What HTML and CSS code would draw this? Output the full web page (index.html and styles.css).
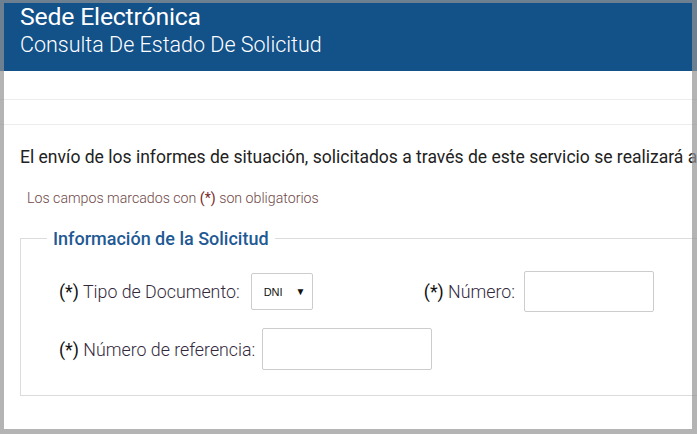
FILE: index.html
```html
<!DOCTYPE html>
<html lang="es">
<head>
<meta charset="utf-8">
<title>Sede Electrónica</title>
<link rel="stylesheet" href="styles.css">
</head>
<body>
<div class="page">
  <header class="header">
    <div class="title">Sede Electrónica</div>
    <div class="subtitle">Consulta De Estado De Solicitud</div>
  </header>
  <div class="bar bar1"></div>
  <div class="bar bar2"></div>
  <main class="content">
    <p class="intro">El envío de los informes de situación, solicitados a través de este servicio se realizará a la dirección de correo electrónico indicada.</p>
    <p class="note">Los campos marcados con <span class="req">(*)</span> son obligatorios</p>
    <fieldset class="box">
      <legend class="legend">Información de la Solicitud</legend>
      <div class="box-body">
        <div class="row1">
          <div class="group">
            <label class="label"><span class="ast">(*)</span> Tipo de Documento:</label>
            <div class="select"><span class="sel-val">DNI</span><span class="arrow">▼</span></div>
          </div>
          <label class="label label-right"><span class="ast">(*)</span> Número:</label>
          <div class="input input-num"></div>
        </div>
        <div class="row2">
          <label class="label"><span class="ast">(*)</span> Número de referencia:</label>
          <div class="input input-ref"></div>
        </div>
      </div>
    </fieldset>
  </main>
</div>
<div class="frame"></div>
</body>
</html>
```
FILE: styles.css
```css
html, body {
  margin: 0;
  padding: 0;
  background: #fff;
  overflow: hidden;
}
body {
  width: 697px;
  height: 434px;
  font-family: Roboto, "Liberation Sans", Arial, sans-serif;
  color: #222;
}
.page {
  width: 697px;
  height: 434px;
  overflow: hidden;
}
.header {
  background: #135189;
  height: 71px;
  box-sizing: border-box;
  padding: 3px 0 0 20px;
  color: #fff;
}
.title {
  font-size: 24.8px;
  line-height: 28px;
  font-weight: 400;
  letter-spacing: -0.2px;
}
.subtitle {
  font-size: 21.5px;
  line-height: 24px;
  font-weight: 300;
  margin-top: 2px;
}
.bar {
  border-bottom: 1px solid #ececec;
}
.bar1 { height: 28px; }
.bar2 { height: 24px; }
.content {
  padding: 0 0 0 20px;
}
.intro {
  margin: 21px 0 0 0;
  font-size: 17.55px;
  line-height: 22px;
  white-space: nowrap;
  color: #222;
}
.note {
  margin: 21px 0 0 7px;
  font-size: 14.2px;
  line-height: 18px;
  font-weight: 300;
  color: #6f4848;
}
.req {
  color: #7a1f1f;
  font-weight: 400;
}
.box {
  margin: 21px 0 0 0;
  padding: 0;
  border: 1px solid #dcdcdc;
  width: 720px;
  box-sizing: border-box;
}
.legend {
  margin-left: 26px;
  padding: 0 6px;
  font-size: 18px;
  font-weight: 500;
  color: #1f5a94;
}
.box-body {
  padding: 22px 0 25px 38px;
}
.row1 {
  display: grid;
  grid-template-columns: 306px 159px 130px;
  align-items: center;
}
.row2 {
  display: flex;
  align-items: center;
  margin-top: 16px;
}
.group {
  display: flex;
  align-items: center;
}
.label {
  font-size: 17.8px;
  font-weight: 300;
  color: #33293d;
  white-space: nowrap;
}
.ast {
  color: #111;
  font-weight: 400;
}
.label-right {
  text-align: right;
  padding-right: 9px;
}
.select {
  margin-left: 11px;
  width: 62px;
  height: 37px;
  box-sizing: border-box;
  border: 1px solid #ccc;
  border-radius: 2px;
  display: flex;
  align-items: center;
  padding: 0 0 0 12px;
  font-size: 11px;
  color: #111;
}
.sel-val {
  font-family: "Liberation Sans", Arial, sans-serif;
}
.arrow {
  margin-left: 13px;
  font-size: 10px;
  color: #111;
}
.input {
  box-sizing: border-box;
  border: 1px solid #ccc;
  border-radius: 2px;
  background: #fff;
}
.input-num {
  width: 130px;
  height: 41px;
}
.input-ref {
  margin-left: 7px;
  width: 170px;
  height: 42px;
}
.frame {
  position: fixed;
  left: 0;
  top: 0;
  width: 697px;
  height: 434px;
  box-sizing: border-box;
  border-style: solid;
  border-color: rgba(148, 148, 148, 0.7);
  border-width: 3px 5px 5px 4px;
  pointer-events: none;
}
```
